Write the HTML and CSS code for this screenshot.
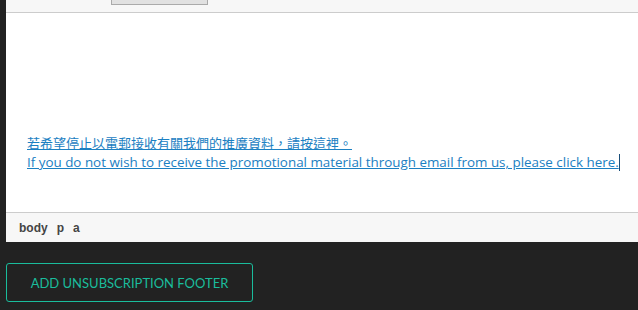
FILE: index.html
```html
<!DOCTYPE html>
<html lang="en">
<head>
  <meta charset="UTF-8">
  <title>Unsubscription Footer</title>
  <link rel="stylesheet" href="styles.css">
</head>
<body>
  <div class="editor">
    <div class="toolbar">
      <span class="tool-btn"></span>
    </div>
    <div class="content">
      <p class="footer-note">
        <a href="#" class="zh">若希望停止以電郵接收有關我們的推廣資料，請按這裡。 </a><br>
        <a href="#">If you do not wish to receive the promotional material through email from us, please click here.</a><span class="caret"></span>
      </p>
    </div>
    <div class="statusbar">
      <span>body</span>
      <span>p</span>
      <span>a</span>
    </div>
  </div>

  <button class="add-footer">ADD UNSUBSCRIPTION FOOTER</button>
</body>
</html>
```

FILE: styles.css
```css
body {
  margin: 0;
  background-color: #222222;
  height: 310px;
  overflow: hidden;
}

.editor {
  margin-left: 6px;
  background-color: #ffffff;
}

.toolbar {
  height: 12px;
  background-color: #f7f7f7;
  border-bottom: 1px solid #cccccc;
  position: relative;
}

.tool-btn {
  position: absolute;
  left: 105px;
  top: -10px;
  width: 95px;
  height: 13px;
  background-color: #e1e1e1;
  border: 1px solid #aaaaaa;
}

.content {
  height: 200px;
  box-sizing: border-box;
  padding: 121px 0 0 21px;
  border-bottom: 1px solid #cccccc;
}

.footer-note {
  margin: 0;
  font-family: "Open Sans", "Noto Sans CJK TC", sans-serif;
  font-size: 13.4px;
  line-height: 19px;
}

.footer-note .zh {
  font-size: 13px;
}

.footer-note a {
  color: #1b80c2;
  text-decoration: underline;
}

.caret {
  display: inline-block;
  width: 1px;
  height: 17px;
  background-color: #1a4f7a;
  vertical-align: -4px;
}

.statusbar {
  height: 29px;
  background-color: #f7f7f7;
  padding-left: 13px;
  display: flex;
  align-items: center;
  gap: 9px;
  font-family: "Liberation Sans", Arial, sans-serif;
  font-size: 12px;
  font-weight: bold;
  color: #444444;
}

.add-footer {
  display: block;
  margin: 21px 0 0 6px;
  width: 247px;
  height: 39px;
  background: transparent;
  border: 1px solid #1abc9c;
  border-radius: 3px;
  color: #1abc9c;
  font-family: Lato, sans-serif;
  font-size: 13px;
  font-weight: 400;
  cursor: pointer;
}
```
